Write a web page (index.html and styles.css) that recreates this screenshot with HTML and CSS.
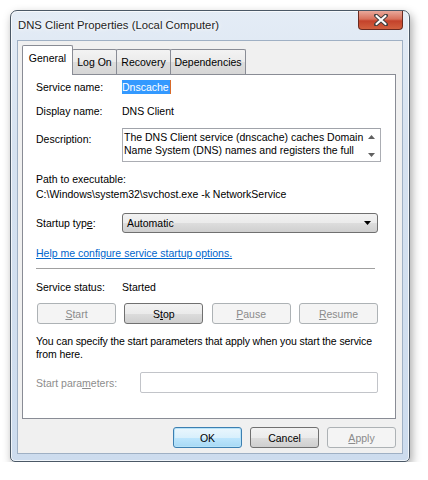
FILE: index.html
```html
<!DOCTYPE html>
<html lang="en">
<head>
  <meta charset="UTF-8">
  <title>DNS Client Properties (Local Computer)</title>
  <link rel="stylesheet" href="styles.css">
</head>
<body>
  <div class="window">
    <div class="titlebar">
      <span class="title">DNS Client Properties (Local Computer)</span>
      <div class="close">
        <svg viewBox="0 0 14 12" width="14" height="12">
          <path d="M2,1.5 L12,10.5 M12,1.5 L2,10.5" stroke="#3d3d3d" stroke-width="4" stroke-linecap="round"/>
          <path d="M2.5,2 L11.5,10 M11.5,2 L2.5,10" stroke="#fff" stroke-width="2.2" stroke-linecap="round"/>
        </svg>
      </div>
    </div>

    <div class="client">
      <div class="tabs">
        <div class="tab active t-general">General</div>
        <div class="tab t-logon">Log On</div>
        <div class="tab t-recovery">Recovery</div>
        <div class="tab t-deps">Dependencies</div>
      </div>

      <div class="panel">
        <div class="row r-name">
          <span class="label">Service name:</span>
          <span class="selected">Dnscache</span>
        </div>
        <div class="row r-display">
          <span class="label">Display name:</span>
          <span>DNS Client</span>
        </div>
        <div class="row r-desc">
          <span class="label">Description:</span>
          <div class="memo">
            <div class="memo-text">
              <div>The DNS Client service (dnscache) caches Domain</div>
              <div>Name System (DNS) names and registers the full</div>
            </div>
            <div class="memo-scroll">
              <svg viewBox="0 0 7 4" width="7" height="4"><polygon points="0,4 3.5,0 7,4" fill="#606060"/></svg>
              <svg viewBox="0 0 7 4" width="7" height="4"><polygon points="0,0 3.5,4 7,0" fill="#606060"/></svg>
            </div>
          </div>
        </div>
        <div class="r-path-label">Path to executable:</div>
        <div class="r-path">C:\Windows\system32\svchost.exe -k NetworkService</div>
        <div class="row r-startup">
          <span class="label">Startup typ<u>e</u>:</span>
          <div class="combo">
            <span>Automatic</span>
            <svg viewBox="0 0 7 4" width="7" height="4"><polygon points="0,0 3.5,4 7,0" fill="#000"/></svg>
          </div>
        </div>
        <a class="help" href="#">Help me configure service startup options.</a>
        <div class="sep"></div>
        <div class="row r-status">
          <span class="label">Service status:</span>
          <span>Started</span>
        </div>
        <div class="buttons">
          <button class="btn" disabled><u>S</u>tart</button>
          <button class="btn">S<u>t</u>op</button>
          <button class="btn" disabled><u>P</u>ause</button>
          <button class="btn" disabled><u>R</u>esume</button>
        </div>
        <p class="hint">You can specify the start parameters that apply when you start the service from here.</p>
        <div class="row r-params">
          <span class="label params-label">Start para<u>m</u>eters:</span>
          <div class="input"></div>
        </div>
      </div>

      <div class="actions">
        <button class="btn default">OK</button>
        <button class="btn">Cancel</button>
        <button class="btn" disabled><u>A</u>pply</button>
      </div>
    </div>
  </div>
</body>
</html>
```

FILE: styles.css
```css
html, body {
  margin: 0;
  padding: 0;
  background: #fff;
}
body {
  font-family: "Liberation Sans", Arial, sans-serif;
  font-size: 10.5px;
  color: #000;
}
.window {
  box-sizing: border-box;
  margin: 10px 0 0 10px;
  width: 400px;
  height: 452px;
  border: 1px solid #4b5866;
  border-radius: 7px 7px 5px 5px;
  background: linear-gradient(to bottom, #e4ecf6 0%, #d6e2f0 30%, #cddcee 100%);
  box-shadow: 2px 4px 10px rgba(0,0,0,0.35), inset 0 0 0 1px rgba(255,255,255,0.7);
  padding: 0 6px 7px 6px;
  display: flex;
  flex-direction: column;
}
.titlebar {
  height: 29px;
  display: flex;
  justify-content: space-between;
  align-items: flex-start;
}
.title {
  margin: 8px 0 0 1px;
  font-size: 11.3px;
  color: #1e1e1e;
  text-shadow: 0 0 6px #fff, 0 0 3px #fff;
}
.close {
  width: 43px;
  height: 18px;
  margin-right: 0;
  border: 1px solid #6b2a20;
  border-top: none;
  border-radius: 0 0 4px 4px;
  background: linear-gradient(to bottom, #e9a99b 0%, #d8715c 45%, #c4422b 55%, #d2603f 100%);
  display: flex;
  align-items: center;
  justify-content: center;
}
.client {
  flex: 1;
  border: 1px solid #9fb0c4;
  background: #f0f0f0;
  padding: 5px 6px 5px 4px;
  display: flex;
  flex-direction: column;
}
.tabs {
  display: flex;
  align-items: flex-end;
  height: 28px;
  padding-left: 1px;
  position: relative;
  z-index: 1;
}
.tab {
  height: 25px;
  box-sizing: border-box;
  padding-top: 6px;
  text-align: center;
  border: 1px solid #898c95;
  border-bottom: none;
  margin-right: -1px;
  background: linear-gradient(to bottom, #f3f3f3 0%, #ebebeb 50%, #dddddd 51%, #d6d6d6 100%);
  border-radius: 2px 2px 0 0;
}
.tab.active {
  height: 30px;
  margin-bottom: -1px;
  background: #fff;
  margin-left: -1px;
}
.t-general { width: 51px; }
.t-logon { width: 45px; }
.t-recovery { width: 55px; }
.t-deps { width: 76px; }
.panel {
  height: 345px;
  box-sizing: border-box;
  border: 1px solid #898c95;
  background: #fff;
  padding: 4px 17px 0 13px;
  display: flex;
  flex-direction: column;
}
.row {
  display: flex;
  align-items: center;
}
.label {
  width: 86px;
  flex-shrink: 0;
}
.r-name {
  height: 16px;
}
.selected {
  background: #3399ff;
  color: #fff;
  padding: 1px 1px 1px 0;
  border-right: 1px solid #d86a2a;
}
.r-display {
  height: 16px;
  margin-top: 8px;
}
.r-desc {
  margin-top: 9px;
  align-items: flex-start;
}
.r-desc .label {
  margin-top: 5px;
}
.memo {
  flex: 1;
  height: 34px;
  box-sizing: border-box;
  border: 1px solid #abadb3;
  border-top-color: #a0a3aa;
  display: flex;
}
.memo-text {
  flex: 1;
  padding: 2px 0 0 1px;
  line-height: 12.5px;
  white-space: nowrap;
}
.memo-scroll {
  width: 17px;
  display: flex;
  flex-direction: column;
  justify-content: space-between;
  align-items: center;
  padding: 6px 0 4px;
}
.r-path-label {
  margin-top: 10px;
  line-height: 15px;
}
.r-path {
  line-height: 15px;
}
.r-startup {
  margin-top: 11px;
}
.combo {
  flex: 1;
  height: 20px;
  box-sizing: border-box;
  border: 1px solid #707070;
  border-radius: 3px;
  background: linear-gradient(to bottom, #f2f2f2 0%, #ebebeb 50%, #dddddd 51%, #cfcfcf 100%);
  display: flex;
  align-items: center;
  justify-content: space-between;
  padding: 0 6px 0 4px;
}
.help {
  margin-top: 12px;
  line-height: 16px;
  color: #0066cc;
  text-decoration: underline;
  align-self: flex-start;
}
.sep {
  margin-top: 7px;
  height: 1px;
  background: #a0a0a0;
  border-bottom: 1px solid #fff;
  margin-right: 3px;
}
.r-status {
  margin-top: 9px;
  height: 16px;
}
.buttons {
  margin-top: 8px;
  display: flex;
  justify-content: space-between;
  padding-left: 1px;
}
.btn {
  font-family: inherit;
  font-size: 10.5px;
  color: #000;
  width: 79px;
  height: 21px;
  padding: 0;
  border: 1px solid #707070;
  border-radius: 3px;
  background: linear-gradient(to bottom, #f2f2f2 0%, #ebebeb 50%, #dddddd 51%, #cfcfcf 100%);
}
.btn:disabled {
  color: #8b8b8b;
  border-color: #adb2b5;
  background: #f4f4f4;
}
.btn.default {
  border-color: #3c7fb1;
  background: linear-gradient(to bottom, #eaf6fd 0%, #d9f0fc 50%, #bee6fd 51%, #a7d9f5 100%);
  box-shadow: inset 0 0 0 1px #b6e2f8;
}
.hint {
  margin: 11px -10px 0 0;
  line-height: 13px;
  letter-spacing: -0.1px;
}
.r-params {
  margin-top: 11px;
}
.params-label {
  width: 104px;
  color: #8d8d8d;
}
.input {
  flex: 1;
  height: 21px;
  box-sizing: border-box;
  border: 1px solid #c2c4c9;
  border-radius: 2px;
  background: #fff;
}
.actions {
  margin-top: 8px;
  display: flex;
  justify-content: flex-end;
  gap: 8px;
}
.actions .btn {
  width: 69px;
}
```
